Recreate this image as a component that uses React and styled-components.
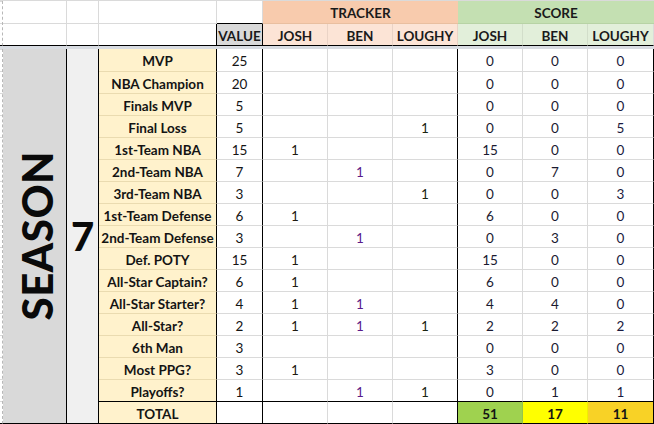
import React from "react"
import styled, { createGlobalStyle } from "styled-components"

const GlobalStyle = createGlobalStyle`
    * { box-sizing: border-box; }
    body {
        margin: 0;
        background: #fff;
        font-family: Lato, "Liberation Sans", sans-serif;
        color: #111;
    }
`

const GRID = "#dadada"
const BLACK = "#000"

const Sheet = styled.div`
    width: 654px;
    height: 424px;
    display: grid;
    grid-template-columns: 3px 64px 32px 118px 46px 65px 65px 65px 65px 65px 66px;
    grid-template-rows: 23px 22px 3px 23px repeat(15, 22px) 22px;
    border-top: 1px solid ${GRID};
    overflow: hidden;
`

//왼쪽 여백 눈금
const Gutter = styled.div`
    grid-column: 1;
    grid-row: ${(p) => p.$rows};
    border-right: 1px dashed #b8b8b8;
    background: repeating-linear-gradient(to bottom, ${GRID} 0 1px, transparent 1px 22px);
    background-position: 0 ${(p) => p.$offset || 0}px;
    ${(p) => p.$blackBottom ? `border-bottom: 1px solid ${BLACK};` : ""}
`

const Blank = styled.div`
    background: ${(p) => p.$bg || "#fff"};
    border-right: 1px solid ${(p) => p.$right || GRID};
    border-bottom: 1px solid ${(p) => p.$bottom || GRID};
`

//헤더
const GroupHeader = styled.div`
    grid-column: span 3;
    background: ${(p) => p.$bg};
    border-bottom: 1px solid ${(p) => p.$line};
    display: flex;
    align-items: center;
    justify-content: center;
    padding-top: 2px;
    font-size: 13.5px;
    font-weight: 700;
    color: #1a1a1a;
`

const SubHeader = styled.div`
    background: ${(p) => p.$bg};
    border-right: 1px solid ${(p) => p.$right || "rgba(0,0,0,0.07)"};
    border-bottom: 1px solid ${BLACK};
    display: flex;
    align-items: center;
    justify-content: center;
    padding-top: 2px;
    font-size: 13.5px;
    font-weight: 700;
    color: #1a1a1a;
`

const ValueHeader = styled(SubHeader)`
    background: #d9d9d9;
    border-right: 1px solid ${BLACK};
`

const Band = styled.div`
    grid-column: 1 / -1;
    background: #d8dce2;
`

//시즌 표시
const SeasonCell = styled.div`
    grid-column: 2;
    grid-row: 4 / -1;
    background: #d9d9d9;
    border-right: 1px solid ${BLACK};
    border-bottom: 1px solid ${BLACK};
    display: flex;
    align-items: center;
    justify-content: center;
`

const SeasonText = styled.span`
    writing-mode: vertical-rl;
    transform: rotate(180deg);
    font-size: 42px;
    font-weight: 900;
    letter-spacing: 0.5px;
    color: #0a0a0a;
    margin-left: 4px;
`

const NumberCell = styled.div`
    grid-column: 3;
    grid-row: 4 / -1;
    background: #f0f0f0;
    border-right: 1px solid ${BLACK};
    border-bottom: 1px solid ${BLACK};
    display: flex;
    align-items: center;
    justify-content: center;
    font-size: 40px;
    font-weight: 900;
    color: #0a0a0a;
`

//본문 셀
const Cell = styled.div`
    background: ${(p) => p.$bg || "#fff"};
    border-right: 1px solid ${(p) => p.$right || GRID};
    border-bottom: 1px solid ${(p) => p.$bottom || GRID};
    display: flex;
    align-items: center;
    justify-content: center;
    padding-top: 2px;
    font-size: 13.5px;
    font-weight: ${(p) => p.$bold ? 700 : 400};
    color: ${(p) => p.$color || "#141414"};
    white-space: nowrap;
`

const LabelCell = styled(Cell)`
    background: #fff2cc;
    border-right-color: ${BLACK};
    border-bottom-color: ${(p) => p.$bottom || "#eadbb0"};
    font-weight: 700;
`

const rows = [
    ["MVP", 25, "", "", "", 0, 0, 0],
    ["NBA Champion", 20, "", "", "", 0, 0, 0],
    ["Finals MVP", 5, "", "", "", 0, 0, 0],
    ["Final Loss", 5, "", "", 1, 0, 0, 5],
    ["1st-Team NBA", 15, 1, "", "", 15, 0, 0],
    ["2nd-Team NBA", 7, "", 1, "", 0, 7, 0],
    ["3rd-Team NBA", 3, "", "", 1, 0, 0, 3],
    ["1st-Team Defense", 6, 1, "", "", 6, 0, 0],
    ["2nd-Team Defense", 3, "", 1, "", 0, 3, 0],
    ["Def. POTY", 15, 1, "", "", 15, 0, 0],
    ["All-Star Captain?", 6, 1, "", "", 6, 0, 0],
    ["All-Star Starter?", 4, 1, 1, "", 4, 4, 0],
    ["All-Star?", 2, 1, 1, 1, 2, 2, 2],
    ["6th Man", 3, "", "", "", 0, 0, 0],
    ["Most PPG?", 3, 1, "", "", 3, 0, 0],
    ["Playoffs?", 1, "", 1, 1, 0, 1, 1],
]

const trackColors = ["#1e1a10", "#5a1a8a", "#1a2410"]
const scoreColors = ["#1a1a30", "#1a1a30", "#1a1a40"]
const totals = [
    { value: 51, bg: "#9fd24f" },
    { value: 17, bg: "#ffff00" },
    { value: 11, bg: "#f8d226" },
]

function DataRow({ row, last }) {
    const [label, value, ...rest] = row
    const bottom = last ? BLACK : undefined
    return (
        <>
            <LabelCell $bottom={bottom}>{label}</LabelCell>
            <Cell $right={BLACK} $bottom={bottom}>{value}</Cell>
            {rest.slice(0, 3).map((v, i) => (
                <Cell key={"t" + i} $color={trackColors[i]} $right={i === 2 ? BLACK : undefined} $bottom={bottom}>{v}</Cell>
            ))}
            {rest.slice(3).map((v, i) => (
                <Cell key={"s" + i} $color={scoreColors[i]} $right={i === 2 ? BLACK : undefined} $bottom={bottom}>{v}</Cell>
            ))}
        </>
    )
}

function App() {
    return (
        <>
            <GlobalStyle />
            <Sheet>
                <Gutter $rows="1 / 3" $blackBottom />
                <Gutter $rows="4 / -1" $offset={22} $blackBottom />

                <Blank />
                <Blank />
                <Blank />
                <Blank $bottom={BLACK} />
                <GroupHeader $bg="#f8cbad" $line="#e9bfa0">TRACKER</GroupHeader>
                <GroupHeader $bg="#c4e0b2" $line="#b7d3a5">SCORE</GroupHeader>

                <Blank $bottom={BLACK} />
                <Blank $bottom={BLACK} />
                <Blank $bottom={BLACK} $right={BLACK} />
                <ValueHeader>VALUE</ValueHeader>
                <SubHeader $bg="#fce4d6">JOSH</SubHeader>
                <SubHeader $bg="#fce4d6">BEN</SubHeader>
                <SubHeader $bg="#fce4d6">LOUGHY</SubHeader>
                <SubHeader $bg="#e2efda">JOSH</SubHeader>
                <SubHeader $bg="#e2efda">BEN</SubHeader>
                <SubHeader $bg="#e2efda" $right={GRID}>LOUGHY</SubHeader>

                <Band />

                <SeasonCell><SeasonText>SEASON</SeasonText></SeasonCell>
                <NumberCell>7</NumberCell>

                {rows.map((row, i) => (
                    <DataRow key={row[0]} row={row} last={i === rows.length - 1} />
                ))}

                <LabelCell $bottom={BLACK}>TOTAL</LabelCell>
                <Cell $right={BLACK} $bottom={BLACK} />
                <Cell $bottom={BLACK} />
                <Cell $bottom={BLACK} />
                <Cell $right={BLACK} $bottom={BLACK} />
                {totals.map((t, i) => (
                    <Cell key={t.value} $bg={t.bg} $bold $right={i === 2 ? BLACK : "rgba(0,0,0,0.06)"} $bottom={BLACK}>{t.value}</Cell>
                ))}
            </Sheet>
        </>
    )
}

export default App
